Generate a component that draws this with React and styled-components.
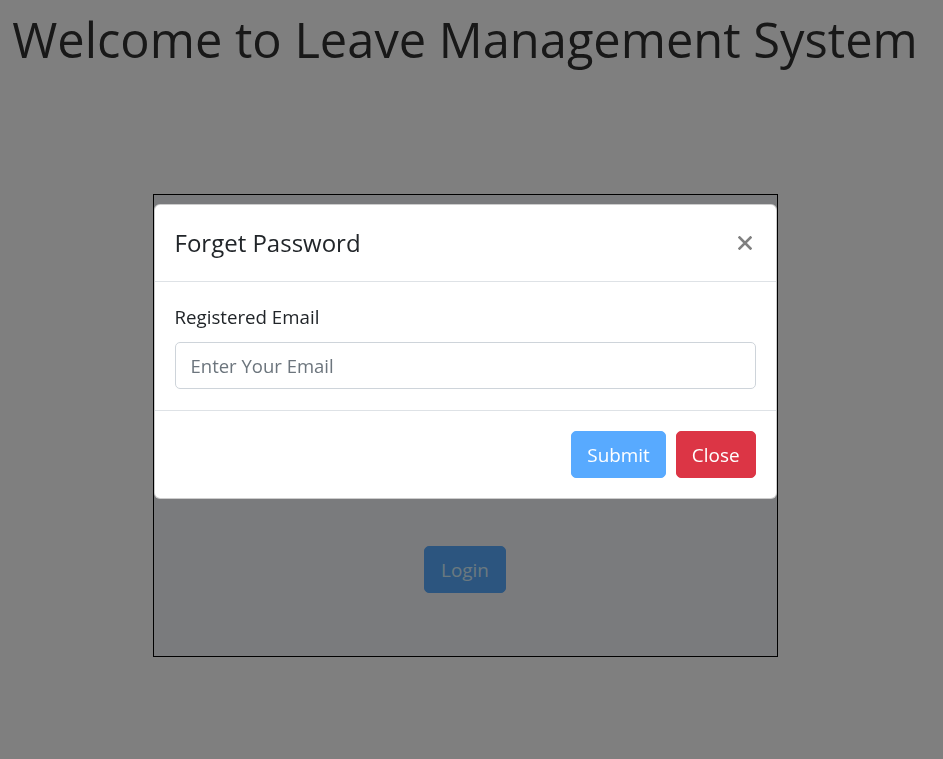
import React, { useState } from 'react';
import styled, { createGlobalStyle } from 'styled-components';

const GlobalStyle = createGlobalStyle`
  html {
    font-size: 20px;
  }
  body {
    margin: 0;
    background: #fff;
    color: #212529;
    font-family: "Open Sans", "Noto Sans", "Liberation Sans", sans-serif;
    line-height: 1.5;
  }
  * {
    box-sizing: border-box;
  }
`;

const Page = styled.div`
  padding-right: 13px;
  min-height: 759px;
`;

const Title = styled.h1`
  margin: 9px 0 0;
  height: 60px;
  font-size: 48.8px;
  font-weight: 500;
  line-height: 60px;
  text-align: center;
  color: #303030;
`;

const LoginBox = styled.div`
  width: 625px;
  height: 463px;
  margin: 125px auto 0;
  border: 1px solid #000;
  background: #f4f6fa;
  padding: 27px 55px 0;
  display: flex;
  flex-direction: column;
`;

const BoxHeading = styled.h3`
  margin: 0 0 20px;
  font-size: 28px;
  font-weight: 500;
  line-height: 40px;
  text-align: center;
`;

const Field = styled.div`
  display: flex;
  flex-direction: column;
  margin-bottom: ${p => p.$last ? '0' : '16px'};
`;

const Label = styled.label`
  display: block;
  margin-bottom: 10px;
  font-size: 18.7px;
  line-height: 30px;
`;

const Input = styled.input`
  display: block;
  width: 100%;
  height: 47px;
  padding: 7px 15px;
  font: inherit;
  font-size: 18.5px;
  line-height: 30px;
  color: #495057;
  background: #fff;
  border: 1px solid #ced4da;
  border-radius: 5px;
  outline: none;

  &::placeholder {
    color: #6c757d;
  }
`;

const ForgotLink = styled.a`
  font-size: 18.7px;
  line-height: 30px;
  color: #0056b3;
  text-decoration: none;
`;

const Button = styled.button`
  display: inline-block;
  padding: 7px 15px;
  font: inherit;
  font-size: 18.9px;
  line-height: 30px;
  height: 47px;
  color: ${p => p.$text || '#fff'};
  background: ${p => p.$bg};
  border: 1px solid ${p => p.$bg};
  border-radius: 5px;
  cursor: pointer;
`;

const LoginButton = styled(Button)`
  align-self: center;
  margin-top: 44px;
  width: 82px;
`;

const Backdrop = styled.div`
  position: fixed;
  inset: 0;
  background: rgba(0, 0, 0, 0.5);
`;

const ModalWrap = styled.div`
  position: fixed;
  inset: 0;
  padding: 204px 13px 0 0;
  display: flex;
  justify-content: center;
  align-items: flex-start;
`;

const Dialog = styled.div`
  width: 623px;
  background: #fff;
  border: 1px solid rgba(0, 0, 0, 0.2);
  border-radius: 6px;
  display: flex;
  flex-direction: column;
`;

const ModalHeader = styled.div`
  display: flex;
  align-items: flex-start;
  justify-content: space-between;
  padding: 20px;
  border-bottom: 1px solid #dee2e6;
`;

const ModalTitle = styled.h5`
  margin: 0;
  font-size: 24px;
  font-weight: 500;
  line-height: 36px;
`;

const CloseX = styled.button`
  padding: 0;
  margin: 10px 3px 0 0;
  width: 16px;
  height: 16px;
  background: transparent;
  border: 0;
  cursor: pointer;
  display: flex;
  align-items: center;
  justify-content: center;
`;

const ModalBody = styled.div`
  padding: 20px 20px 21px;
`;

const ModalFooter = styled.div`
  display: flex;
  justify-content: flex-end;
  align-items: center;
  gap: 10px;
  padding: 20px;
  border-top: 1px solid #dee2e6;
`;

const App = () => {
  const [email, setEmail] = useState('');

  return (
    <>
      <GlobalStyle />
      <Page>
        <Title>Welcome to Leave Management System</Title>
        <LoginBox>
          <BoxHeading>Login</BoxHeading>
          <Field>
            <Label>Username</Label>
            <Input placeholder="Enter Username" />
          </Field>
          <Field $last>
            <Label>Password</Label>
            <Input type="password" placeholder="Enter Password" />
          </Field>
          <ForgotLink href="#">Forgot your password?</ForgotLink>
          <LoginButton $bg="#58aaff" $text="#d6f2ff">Login</LoginButton>
        </LoginBox>
      </Page>

      <Backdrop />
      <ModalWrap>
        <Dialog>
          <ModalHeader>
            <ModalTitle>Forget Password</ModalTitle>
            <CloseX aria-label="Close">
              <svg width="14" height="14" viewBox="0 0 14 14">
                <path d="M1.5 1.5 L12.5 12.5 M12.5 1.5 L1.5 12.5" stroke="#808080" strokeWidth="2.6" strokeLinecap="square" />
              </svg>
            </CloseX>
          </ModalHeader>
          <ModalBody>
            <Label>Registered Email</Label>
            <Input
              placeholder="Enter Your Email"
              value={email}
              onChange={e => setEmail(e.target.value)}
            />
          </ModalBody>
          <ModalFooter>
            <Button $bg="#58aaff">Submit</Button>
            <Button $bg="#dc3545">Close</Button>
          </ModalFooter>
        </Dialog>
      </ModalWrap>
    </>
  );
};

export default App;
